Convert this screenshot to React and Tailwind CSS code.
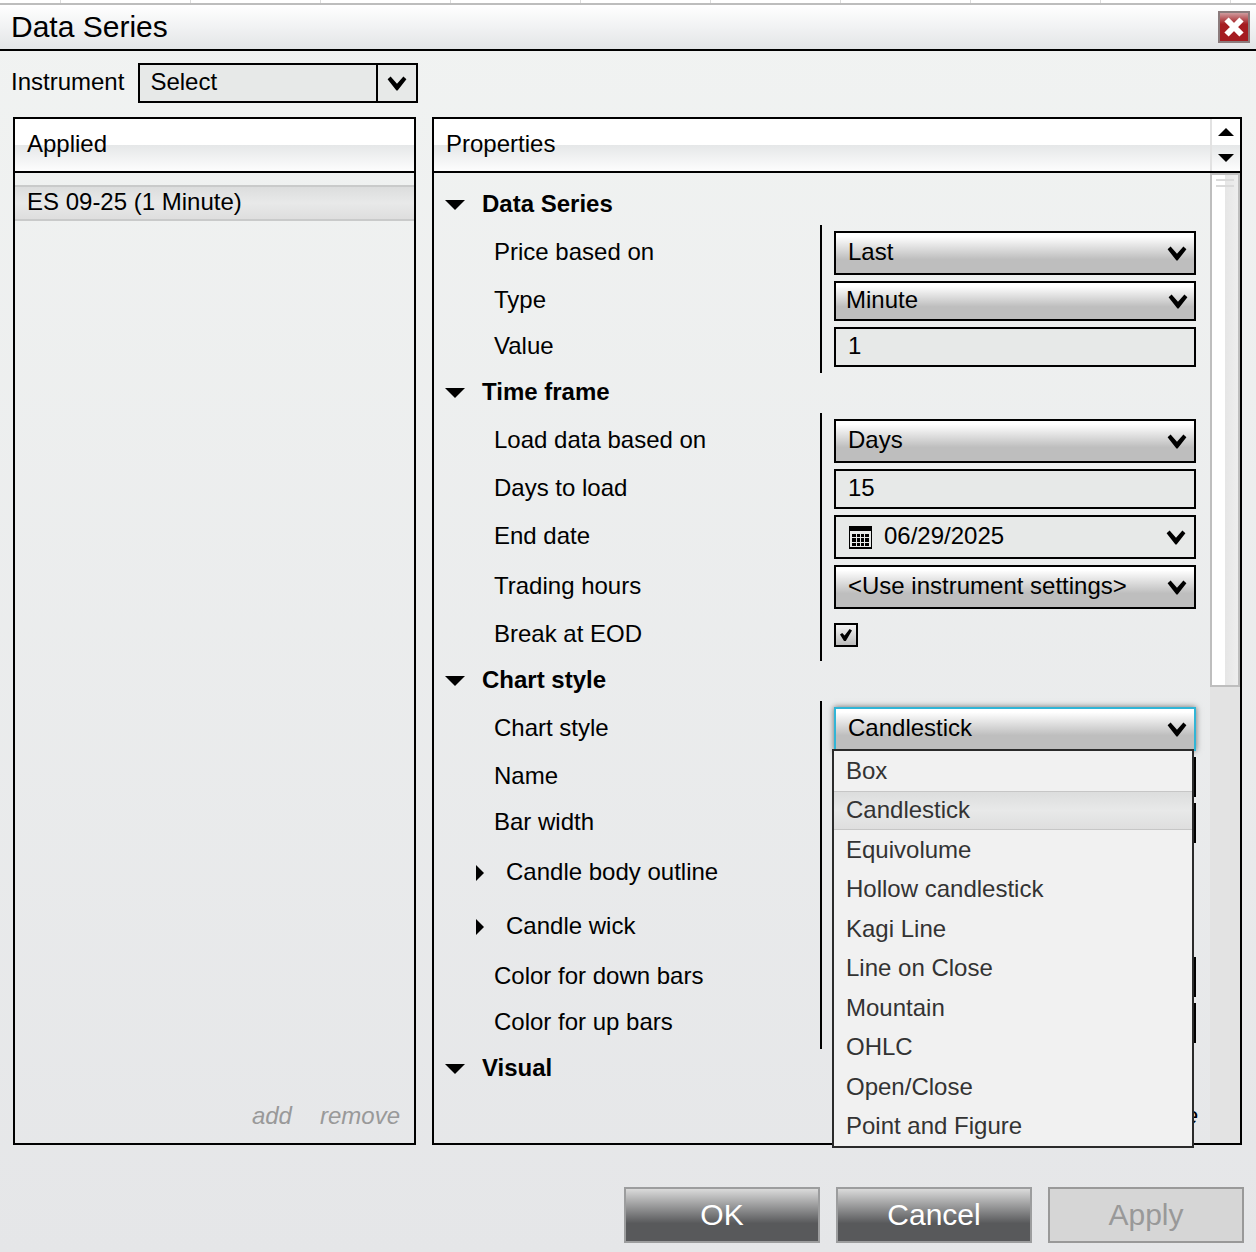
import { useState } from 'react';

const CHART_STYLES = [
  'Box', 'Candlestick', 'Equivolume', 'Hollow candlestick', 'Kagi Line',
  'Line on Close', 'Mountain', 'OHLC', 'Open/Close', 'Point and Figure',
];

const SELECT_BG = 'bg-[linear-gradient(to_bottom,#ffffff_8%,#bebebe_66%,#bebebe)]';
const BAR_BG = 'bg-[linear-gradient(to_bottom,#ffffff_50%,#e5e7e8_50%,#fdfdfd)]';
const SELECTED_BG = 'bg-[linear-gradient(to_bottom,#dcdddd,#e8e9e9_50%,#dedede)]';

function Chevron({ className = '' }) {
  return (
    <svg viewBox="0 0 20 15" width="20" height="15" className={`pointer-events-none ${className}`} aria-hidden="true">
      <path d="M3.6 0.4 L10 7.8 L16.4 0.4 L19.4 3.2 L10.6 14.6 H9.4 L0.6 3.2 Z" />
    </svg>
  );
}

function Section({ title, children }) {
  const [open, setOpen] = useState(true);
  return (
    <section>
      <button type="button" onClick={() => setOpen(!open)} className="flex h-10 w-full items-center gap-[17px] pl-[11px] font-bold">
        <svg viewBox="0 0 20 10" width="20" height="10" aria-hidden="true">
          <path d={open ? 'M0 0 H20 L10 10 Z' : 'M6 0 L14 5 L6 10 Z'} />
        </svg>
        <span className="pb-0.5">{title}</span>
      </button>
      {open && children && (
        <div className="relative flex flex-col gap-1.5 py-1.5">
          {children}
          <div className="absolute inset-y-0 right-[388px] w-0.5 bg-black" />
        </div>
      )}
    </section>
  );
}

function Row({ label, htmlFor, children }) {
  return (
    <div className="flex min-h-10 items-center pl-[60px] pr-3.5">
      <label htmlFor={htmlFor} className="flex-1 pb-0.5">{label}</label>
      <div className="relative w-[362px]">{children}</div>
    </div>
  );
}

function ExpandRow({ label }) {
  return (
    <button type="button" className="flex h-12 items-center gap-[22px] pl-[42px]">
      <svg viewBox="0 0 8 16" width="8" height="16" aria-hidden="true">
        <path d="M0 0 L8 8 L0 16 Z" />
      </svg>
      <span className="pb-0.5">{label}</span>
    </button>
  );
}

function SelectField({ id, value, compact }) {
  return (
    <>
      <select id={id} defaultValue={value}
        className={`block w-full appearance-none border-2 border-black pb-0.5 outline-none ${SELECT_BG} ${compact ? 'h-10 pl-2.5' : 'h-11 pl-3'}`}>
        <option>{value}</option>
      </select>
      <Chevron className={`absolute inset-y-0 my-auto ${compact ? 'right-2' : 'right-[9px]'}`} />
    </>
  );
}

function TextField({ id, value }) {
  return (
    <input id={id} type="text" defaultValue={value}
      className="block h-10 w-full border-2 border-black bg-[#e7e9e8] pb-0.5 pl-3 outline-none" />
  );
}

function DateField({ id, value }) {
  return (
    <div className="flex h-11 items-center border-2 border-black bg-[#e7e9e8] pl-[13px] pr-2">
      <svg viewBox="0 0 23 23" width="23" height="23" shapeRendering="crispEdges" className="shrink-0" aria-hidden="true">
        <path d="M0 0 H23 V23 H0 Z M1 5 V21 H22 V5 Z" fillRule="evenodd" />
        <path d="M3 8h4v3h-4z M8 8h3v3h-3z M12 8h3v3h-3z M16 8h4v3h-4z M3 12h4v4h-4z M8 12h3v4h-3z M12 12h3v4h-3z M16 12h4v4h-4z M3 17h4v3h-4z M8 17h3v3h-3z M12 17h3v3h-3z M16 17h4v3h-4z" />
      </svg>
      <input id={id} type="text" defaultValue={value} className="min-w-0 flex-1 bg-transparent pb-0.5 pl-3 outline-none" />
      <button type="button" aria-label="Open calendar"><Chevron /></button>
    </div>
  );
}

function ChartStyleField({ id }) {
  const [open, setOpen] = useState(true);
  const [value, setValue] = useState('Candlestick');

  const choose = (style) => {
    setValue(style);
    setOpen(false);
  };

  return (
    <>
      <select id={id} value={value} onChange={e => choose(e.target.value)}
        onMouseDown={e => { e.preventDefault(); setOpen(!open); }}
        className={`block h-11 w-full appearance-none border-2 border-[#31b5d6] pb-0.5 pl-3 shadow-[0_0_6px_rgba(0,0,0,0.55)] outline-none ${SELECT_BG}`}>
        {CHART_STYLES.map(s => <option key={s}>{s}</option>)}
      </select>
      <Chevron className="absolute inset-y-0 right-[9px] my-auto" />
      {open && (
        <ul className="absolute -left-0.5 top-[42px] z-10 flex h-[399px] w-full flex-col border-2 border-[#2b2b2b] bg-[#f1f1f1] text-[#333333]">
          {CHART_STYLES.map(s => (
            <li key={s} className="flex flex-1">
              <button type="button" onClick={() => choose(s)}
                className={`w-full border-y pl-3 text-left ${s === value ? `border-[#c6c6c6] ${SELECTED_BG}` : 'border-transparent'}`}>
                {s}
              </button>
            </li>
          ))}
        </ul>
      )}
    </>
  );
}

export default function App() {
  const [breakEod, setBreakEod] = useState(true);

  return (
    <div className="flex min-h-screen flex-col bg-[linear-gradient(to_bottom,#f1f3f2,#e5e6e8)] font-['Liberation_Sans',Arial,sans-serif] text-2xl leading-7 text-black">
      <div className="h-[3px] bg-white bg-[linear-gradient(to_right,#dcdcdc_1px,transparent_1px)] bg-[length:130px_3px] bg-[position:60px_0]" />

      <header className="flex h-12 items-center justify-between border-b-2 border-t-2 border-b-black border-t-[#bdbdbd] bg-[linear-gradient(to_bottom,#ffffff,#e3e5e7)] pl-[11px] pr-1.5">
        <h1 className="text-3xl">Data Series</h1>
        <button type="button" aria-label="Close"
          className="flex size-8 items-center justify-center border-2 border-[#8b7b7c] bg-[linear-gradient(to_bottom,#cf9a9d,#a51c21_40%,#a51c21)]">
          <svg viewBox="0 0 20 20" width="20" height="20" stroke="white" strokeWidth="6" aria-hidden="true">
            <path d="M2.5 2.5 L17.5 17.5 M17.5 2.5 L2.5 17.5" />
          </svg>
        </button>
      </header>

      <div className="flex items-center gap-3.5 px-[11px] pb-3.5 pt-3">
        <label htmlFor="instrument" className="pb-0.5">Instrument</label>
        <div className="relative w-[280px]">
          <select id="instrument" className="block h-10 w-full appearance-none border-2 border-black bg-[#e7e9e8] pb-0.5 pl-2.5 outline-none">
            <option>Select</option>
          </select>
          <div className="pointer-events-none absolute inset-y-0 right-0 flex w-[42px] items-center justify-center border-x-2 border-black">
            <Chevron />
          </div>
        </div>
      </div>

      <main className="flex flex-1 gap-4 pl-[13px] pr-3.5">
        <section className="flex w-[403px] shrink-0 flex-col border-2 border-black">
          <h2 className={`flex h-[54px] items-center border-b-2 border-black pb-0.5 pl-3 ${BAR_BG}`}>Applied</h2>
          <ul className="flex-1 pt-3">
            <li className={`flex h-9 items-center border-y-2 border-[#c9caca] pb-0.5 pl-3 ${SELECTED_BG}`}>ES 09-25 (1 Minute)</li>
          </ul>
          <div className="flex justify-end gap-7 pb-[13px] pr-3.5 italic text-[#999999]">
            <button type="button" disabled>add</button>
            <button type="button" disabled>remove</button>
          </div>
        </section>

        <section className="flex min-w-0 flex-1 flex-col border-2 border-black">
          <div className={`flex h-[54px] border-b-2 border-black ${BAR_BG}`}>
            <h2 className="flex flex-1 items-center pb-0.5 pl-3">Properties</h2>
            <div className="flex w-[30px] flex-col border-l-2 border-[#e2e2e2]">
              <button type="button" aria-label="Scroll up" className="flex flex-1 items-center justify-center">
                <svg viewBox="0 0 16 8" width="16" height="8" aria-hidden="true"><path d="M0 8 L8 0 L16 8 Z" /></svg>
              </button>
              <button type="button" aria-label="Scroll down" className="flex flex-1 items-center justify-center">
                <svg viewBox="0 0 16 8" width="16" height="8" aria-hidden="true"><path d="M0 0 L8 8 L16 0 Z" /></svg>
              </button>
            </div>
          </div>

          <div className="flex flex-1">
            <div className="flex min-w-0 flex-1 flex-col pt-3">
              <Section title="Data Series">
                <Row label="Price based on" htmlFor="price"><SelectField id="price" value="Last" /></Row>
                <Row label="Type" htmlFor="type"><SelectField id="type" value="Minute" compact /></Row>
                <Row label="Value" htmlFor="value"><TextField id="value" value="1" /></Row>
              </Section>
              <Section title="Time frame">
                <Row label="Load data based on" htmlFor="load"><SelectField id="load" value="Days" /></Row>
                <Row label="Days to load" htmlFor="days"><TextField id="days" value="15" /></Row>
                <Row label="End date" htmlFor="end"><DateField id="end" value="06/29/2025" /></Row>
                <Row label="Trading hours" htmlFor="hours"><SelectField id="hours" value="<Use instrument settings>" /></Row>
                <Row label="Break at EOD" htmlFor="eod">
                  <input id="eod" type="checkbox" checked={breakEod} onChange={e => setBreakEod(e.target.checked)}
                    className="block size-6 appearance-none border-2 border-black bg-[linear-gradient(to_bottom,#f4f4f4,#bcbcbc)]" />
                  {breakEod && (
                    <svg viewBox="0 0 12 12" width="12" height="12" className="pointer-events-none absolute left-1.5 top-1.5" aria-hidden="true">
                      <path d="M0 5.4 L2.2 4 L4.6 6.6 L9.6 0 L12 1.4 L5.8 12 H4 Z" />
                    </svg>
                  )}
                </Row>
              </Section>
              <Section title="Chart style">
                <Row label="Chart style" htmlFor="style"><ChartStyleField id="style" /></Row>
                <Row label="Name" htmlFor="name"><TextField id="name" /></Row>
                <Row label="Bar width" htmlFor="width"><TextField id="width" /></Row>
                <ExpandRow label="Candle body outline" />
                <ExpandRow label="Candle wick" />
                <Row label="Color for down bars" htmlFor="down"><TextField id="down" /></Row>
                <Row label="Color for up bars" htmlFor="up"><TextField id="up" /></Row>
              </Section>
              <Section title="Visual" />
              <div className="mt-auto flex justify-end pb-[13px] pr-3 pt-[13px]">
                <button type="button" className="italic">template</button>
              </div>
            </div>

            <div className="w-[30px] bg-[#e3e3e3]">
              <div className="flex h-[514px] flex-col items-center gap-1 border-2 border-[#bebebe] bg-[linear-gradient(to_right,#ffffff_50%,#e6e6e6_50%,#eeeeee)] pt-1">
                <div className="h-0.5 w-[18px] bg-[#dadada]" />
                <div className="h-0.5 w-[18px] bg-[#dadada]" />
              </div>
            </div>
          </div>
        </section>
      </main>

      <footer className="flex justify-end gap-4 pb-[9px] pl-3 pr-3 pt-[42px] text-3xl">
        <button type="button" className="h-14 w-[196px] border-2 border-[#9c9d9e] bg-[linear-gradient(to_bottom,#dadada,#58595b_66%,#58595b)] text-white">OK</button>
        <button type="button" className="h-14 w-[196px] border-2 border-[#9c9d9e] bg-[linear-gradient(to_bottom,#dadada,#58595b_66%,#58595b)] text-white">Cancel</button>
        <button type="button" disabled className="h-14 w-[196px] border-2 border-[#999999] bg-[#d6d6d6] text-[#999999]">Apply</button>
      </footer>
    </div>
  );
}
